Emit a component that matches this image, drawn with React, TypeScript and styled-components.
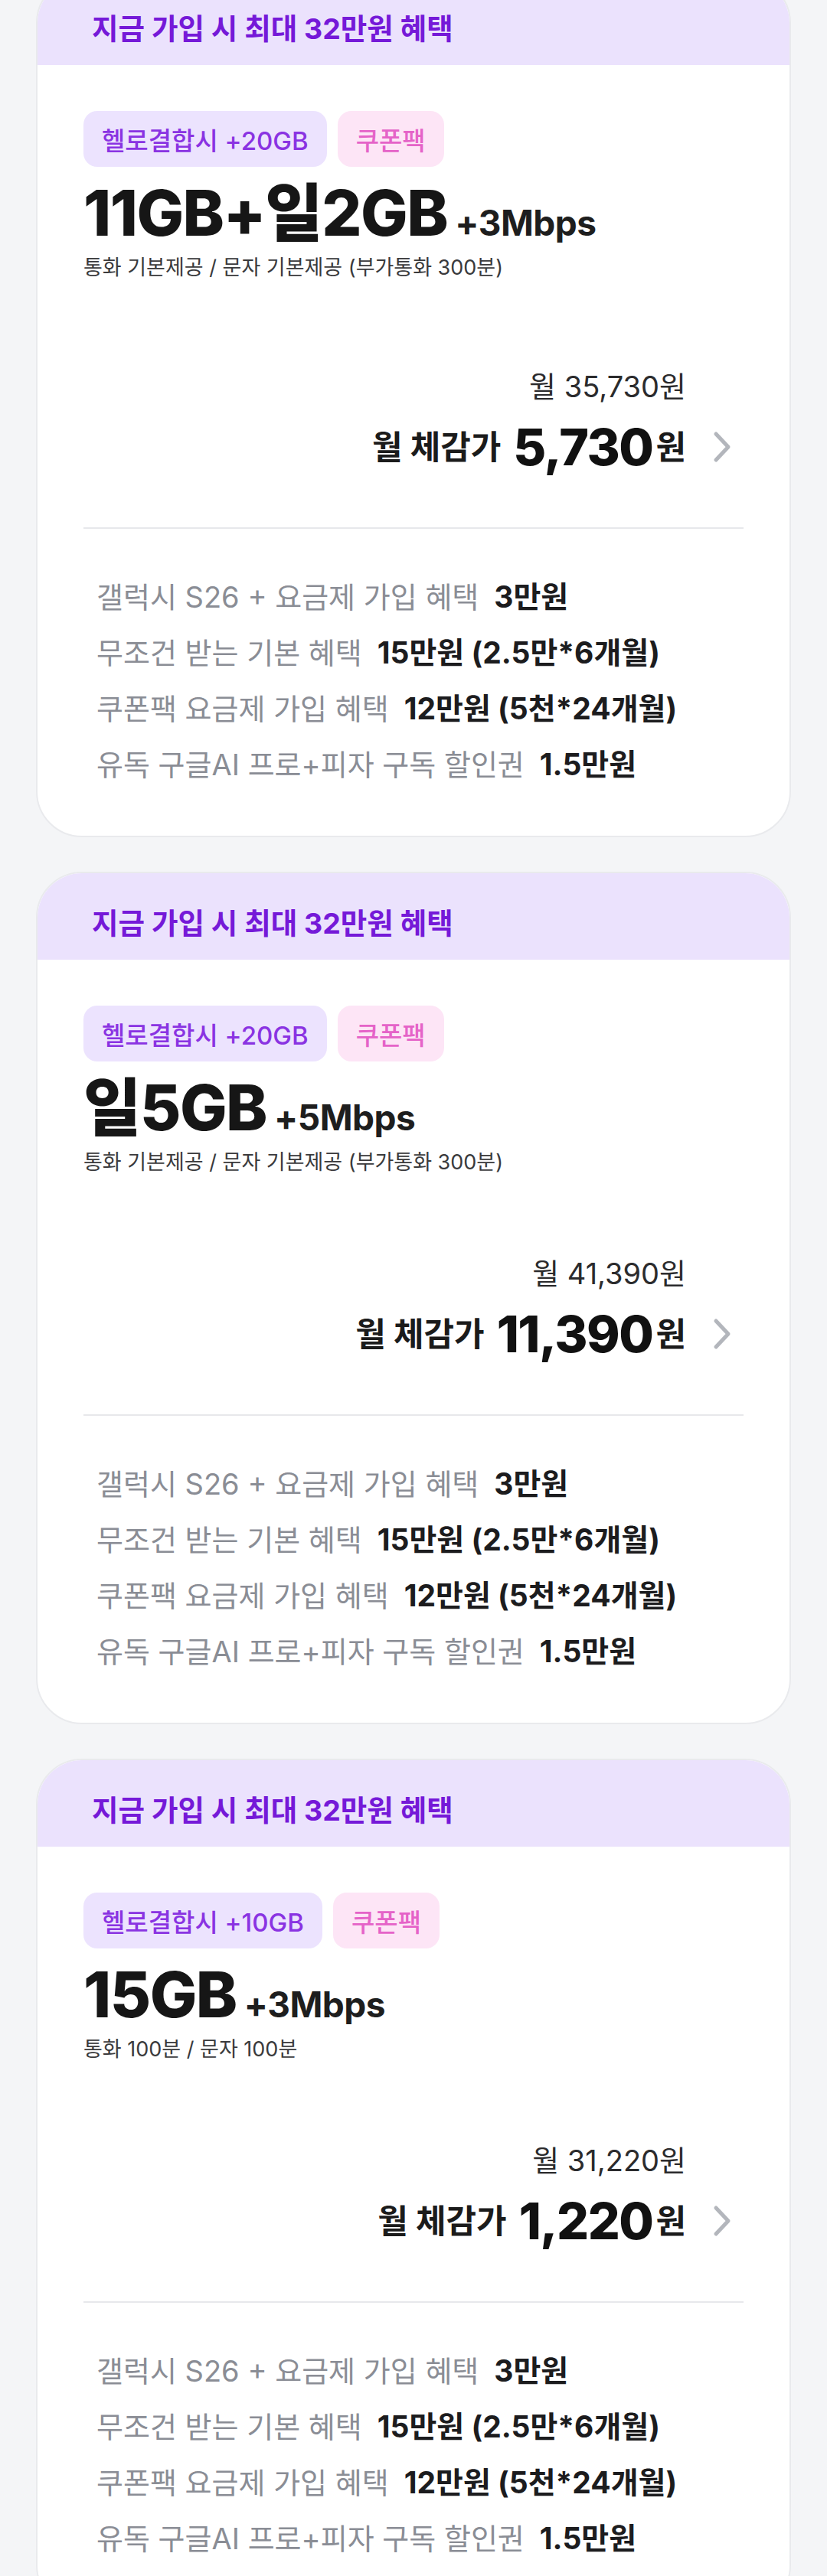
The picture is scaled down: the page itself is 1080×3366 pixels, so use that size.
import React from 'react';
import styled, { createGlobalStyle } from 'styled-components';

interface Benefit {
  label: string;
  value: string;
}

interface Plan {
  combo: string;
  data: string;
  speed: string;
  voice: string;
  listPrice: string;
  realPrice: string;
  extraGap?: number;
}

const benefits: Benefit[] = [
  { label: '갤럭시 S26 + 요금제 가입 혜택', value: '3만원' },
  { label: '무조건 받는 기본 혜택', value: '15만원 (2.5만*6개월)' },
  { label: '쿠폰팩 요금제 가입 혜택', value: '12만원 (5천*24개월)' },
  { label: '유독 구글AI 프로+피자 구독 할인권', value: '1.5만원' },
];

const plans: Plan[] = [
  {
    combo: '헬로결합시 +20GB',
    data: '11GB+일2GB',
    speed: '+3Mbps',
    voice: '통화 기본제공 / 문자 기본제공 (부가통화 300분)',
    listPrice: '35,730',
    realPrice: '5,730',
    extraGap: 10,
  },
  {
    combo: '헬로결합시 +20GB',
    data: '일5GB',
    speed: '+5Mbps',
    voice: '통화 기본제공 / 문자 기본제공 (부가통화 300분)',
    listPrice: '41,390',
    realPrice: '11,390',
  },
  {
    combo: '헬로결합시 +10GB',
    data: '15GB',
    speed: '+3Mbps',
    voice: '통화 100분 / 문자 100분',
    listPrice: '31,220',
    realPrice: '1,220',
  },
];

const GlobalStyle = createGlobalStyle`
  html, body {
    margin: 0;
    padding: 0;
    background: #f4f5f7;
  }
  body {
    font-family: Inter, "Noto Sans CJK KR", sans-serif;
    color: #1b1b1b;
    overflow: hidden;
  }
`;

const Chevron = () => (
  <svg width="24" height="42" viewBox="0 0 24 42" fill="none">
    <path d="M4 4 L20 21 L4 38" stroke="#b3b6bc" strokeWidth="5" strokeLinecap="round" strokeLinejoin="round" />
  </svg>
);

const PlanCard: React.FC<{ plan: Plan }> = ({ plan }) => (
  <Card>
    <Banner>지금 가입 시 최대 32만원 혜택</Banner>
    <Body>
      <TagRow>
        <Tag tone="purple">{plan.combo}</Tag>
        <Tag tone="pink">쿠폰팩</Tag>
      </TagRow>
      <TitleRow>
        <DataAmount>{plan.data}</DataAmount>
        <Speed>{plan.speed}</Speed>
      </TitleRow>
      <Voice>{plan.voice}</Voice>
      <PriceRow gap={103 + (plan.extraGap || 0)}>
        <PriceCol>
          <ListPrice>월 {plan.listPrice}원</ListPrice>
          <RealPrice>
            <RealLabel>월 체감가</RealLabel>
            <RealNumber>{plan.realPrice}</RealNumber>
            <RealUnit>원</RealUnit>
          </RealPrice>
        </PriceCol>
        <ChevronBox>
          <Chevron />
        </ChevronBox>
      </PriceRow>
      <Divider />
      <BenefitList>
        {benefits.map((b) => (
          <BenefitLine key={b.label}>
            <BenefitLabel>{b.label}</BenefitLabel>
            <BenefitValue>{b.value}</BenefitValue>
          </BenefitLine>
        ))}
      </BenefitList>
    </Body>
  </Card>
);

export default function App() {
  return (
    <>
      <GlobalStyle />
      <Page>
        <CardList>
          {plans.map((p) => (
            <PlanCard key={p.data} plan={p} />
          ))}
        </CardList>
      </Page>
    </>
  );
}

const Page = styled.div`
  padding: 0 47px;
`;

const CardList = styled.div`
  display: flex;
  flex-direction: column;
  gap: 45px;
  margin-top: -30px;
`;

const Card = styled.div`
  background: #ffffff;
  border: 2px solid #e9eaed;
  border-radius: 60px;
  overflow: hidden;
`;

const Banner = styled.div`
  background: #ebe2fd;
  padding: 46px 0 27px 71px;
  line-height: 40px;
  font-size: 37.5px;
  font-weight: 700;
  color: #7519d8;
`;

const Body = styled.div`
  padding: 60px 60px 76px;
`;

const TagRow = styled.div`
  display: flex;
  gap: 14px;
`;

const Tag = styled.span<{ tone: 'purple' | 'pink' }>`
  display: inline-flex;
  align-items: center;
  height: 73px;
  padding: 0 24px;
  border-radius: 18px;
  font-size: 33px;
  font-weight: 500;
  background: ${({ tone }) => (tone === 'purple' ? '#ece3fe' : '#fde5f6')};
  color: ${({ tone }) => (tone === 'purple' ? '#8a33e2' : '#e563c8')};
`;

const TitleRow = styled.div`
  display: flex;
  align-items: baseline;
  gap: 10px;
  margin-top: 13px;
`;

const DataAmount = styled.span`
  font-size: 82px;
  line-height: 96px;
  font-weight: 800;
  letter-spacing: -1.5px;
  color: #161616;
`;

const Speed = styled.span`
  font-size: 46px;
  line-height: 50px;
  font-weight: 700;
  letter-spacing: -0.5px;
  color: #1e1e1e;
`;

const Voice = styled.div`
  margin-top: 5px;
  font-size: 27px;
  line-height: 36px;
  color: #3a3a3c;
`;

const PriceRow = styled.div<{ gap: number }>`
  display: flex;
  justify-content: flex-end;
  align-items: flex-end;
  margin-top: ${({ gap }) => gap}px;
`;

const PriceCol = styled.div`
  display: flex;
  flex-direction: column;
  align-items: flex-end;
  gap: 19px;
`;

const ListPrice = styled.div`
  font-size: 38px;
  line-height: 48px;
  color: #2b2b2d;
`;

const RealPrice = styled.div`
  display: flex;
  align-items: center;
  height: 72px;
`;

const RealLabel = styled.span`
  font-size: 43px;
  line-height: 48px;
  font-weight: 700;
  color: #1b1b1b;
`;

const RealUnit = styled(RealLabel)`
  margin-left: 4px;
`;

const RealNumber = styled.span`
  font-size: 66px;
  line-height: 72px;
  font-weight: 800;
  letter-spacing: -1.5px;
  color: #111111;
  margin-left: 16px;
`;

const ChevronBox = styled.div`
  display: flex;
  align-items: center;
  height: 72px;
  margin: 0 16px 0 35px;
`;

const Divider = styled.div`
  height: 2px;
  background: #e7e8eb;
  margin-top: 69px;
`;

const BenefitList = styled.div`
  display: flex;
  flex-direction: column;
  gap: 33px;
  padding: 66px 0 0 17px;
`;

const BenefitLine = styled.div`
  display: flex;
  align-items: center;
  height: 40px;
`;

const BenefitLabel = styled.span`
  font-size: 38px;
  color: #8a8d95;
`;

const BenefitValue = styled.span`
  margin-left: 20px;
  font-size: 39px;
  font-weight: 700;
  color: #1c1c1e;
`;
